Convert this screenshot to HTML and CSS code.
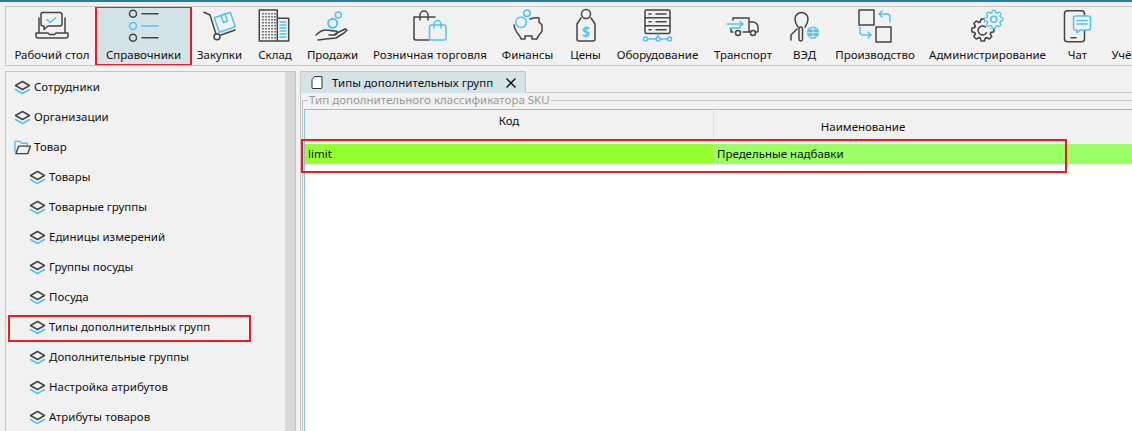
FILE: index.html
```html
<!DOCTYPE html>
<html lang="ru">
<head>
<meta charset="utf-8">
<title>Типы дополнительных групп</title>
<link rel="stylesheet" href="styles.css">
</head>
<body>
<svg class="defs" width="0" height="0" aria-hidden="true">
  <symbol id="layer" viewBox="0 0 17 14">
    <path class="sb" d="M1.500 9l7 4 7-4"/>
    <path class="sd" d="M8.500 1L15.500 5 8.500 9 1.500 5z"/>
  </symbol>
  <symbol id="folder" viewBox="0 0 18 15">
    <path class="sb" d="M1 12V1h5l2 2h6v2"/>
    <path class="sd" d="M5 6h12.500l-3 8H2z"/>
  </symbol>
  <g id="gear">
    <path d="M-2.500-8.200l.8-2.800h3.400l.8 2.800"/>
    <path transform="rotate(45)" d="M-2.500-8.200l.8-2.800h3.400l.8 2.800"/>
    <path transform="rotate(90)" d="M-2.500-8.200l.8-2.800h3.400l.8 2.800"/>
    <path transform="rotate(135)" d="M-2.500-8.200l.8-2.800h3.400l.8 2.800"/>
    <path transform="rotate(180)" d="M-2.500-8.200l.8-2.800h3.400l.8 2.800"/>
    <path transform="rotate(225)" d="M-2.500-8.200l.8-2.800h3.400l.8 2.800"/>
    <path transform="rotate(270)" d="M-2.500-8.200l.8-2.800h3.400l.8 2.800"/>
    <path transform="rotate(315)" d="M-2.500-8.200l.8-2.800h3.400l.8 2.800"/>
    <path d="M2.500-8.200A8.600 8.600 0 0 1 4 -7.500M7.500-4A8.600 8.600 0 0 1 8.200-2.500M8.200 2.500A8.600 8.600 0 0 1 7.500 4M4 7.500A8.600 8.600 0 0 1 2.500 8.200M-2.500 8.200A8.600 8.600 0 0 1-4 7.500M-7.500 4A8.600 8.600 0 0 1-8.200 2.500M-8.200-2.500A8.600 8.600 0 0 1-7.500-4M-4-7.500A8.600 8.600 0 0 1-2.500-8.200"/>
  </g>
</svg>
<div class="topline"></div>
<nav class="toolbar">
  <div class="tool">
    <svg class="ic" viewBox="0 0 40 36"><path class="sd" d="M11 5.500h17a2 2 0 0 1 2 2v9.500a2 2 0 0 1-2 2H16l-4 3.500v-3.500h-1a2 2 0 0 1-2-2V7.500a2 2 0 0 1 2-2z"/><path class="sd" d="M7 11v15M33 11v15M4 26h12l1.500 1.500h5L24 26h12v3a2 2 0 0 1-2 2H6a2 2 0 0 1-2-2z"/><path class="sb" d="M15 12.500l3 3 6-5"/></svg>
    <span>Рабочий стол</span>
  </div>
  <div class="tool tool-active">
    <svg class="ic" viewBox="0 0 40 36"><circle class="sd" cx="9" cy="6.700" r="3.500"/><path class="sd" d="M18 6.700h16"/><circle class="sb" cx="9" cy="19" r="3.500"/><path class="sb" d="M18 19h16"/><circle class="sd" cx="9" cy="30.700" r="3.500"/><path class="sd" d="M18 30.700h16"/></svg>
    <span>Справочники</span>
  </div>
  <div class="tool">
    <svg class="ic" viewBox="0 0 40 36"><path class="sd" d="M4 5.300L10 8l6 19.300M21 28l14-5"/><circle class="sd" cx="17" cy="29.700" r="3"/><path class="sb" d="M14.300 10.700L30.300 5.300l5 14.400-16 5.600z"/><path class="sb" d="M21 8.500l2.500 7 4-1.500-2.500-7"/></svg>
    <span>Закупки</span>
  </div>
  <div class="tool">
    <svg class="ic" viewBox="0 0 40 36"><path class="sd" d="M4.300 3h18v31h-18zM22.300 11.300h11.400V34H22.300z"/><path class="dots" d="M8 6v26M11 6v26M14 6v26M17 6v26M20 6v26"/><path class="stripes" d="M24.500 15h7M24.500 18h7M24.500 21h7M24.500 24h7M24.500 27h7M24.500 30h7"/></svg>
    <span>Склад</span>
  </div>
  <div class="tool">
    <svg class="ic" viewBox="0 0 40 36"><circle class="sb" cx="25.300" cy="8" r="3"/><circle class="sb sb2" cx="19.700" cy="16.300" r="4.500"/><path class="sd" d="M3 28c3-3 6-5 10-5 3 0 6 1 9 1 3 0 3 3 0 4h-6M22 27l10-5 2 1-3 3-8 5-10 1-8 1"/></svg>
    <span>Продажи</span>
  </div>
  <div class="tool">
    <svg class="ic" viewBox="0 0 40 36"><path class="sd" d="M25 10H4v21c0 1 .5 2 2 2h13M10 13V8a4 4 0 0 1 8 0v5"/><rect class="sb" x="19.500" y="18" width="16.500" height="15" rx="2"/><path class="sb" d="M24 21v-4a3.500 3.500 0 0 1 7 0v4"/></svg>
    <span>Розничная торговля</span>
  </div>
  <div class="tool">
    <svg class="ic" viewBox="0 0 40 36"><path class="sd" d="M22 12c3-1 6-2 9-1v4l3 3v6c-1 3-5 5-5 8h-5v-3h-7v3h-4c0-3-6-6-7-14"/><circle class="sb" cx="13" cy="15.300" r="5.300"/><circle class="sb" cx="19" cy="6.300" r="3.200"/></svg>
    <span>Финансы</span>
  </div>
  <div class="tool">
    <svg class="ic" viewBox="0 0 40 36"><circle class="sd" cx="20" cy="7" r="4.500"/><path class="sd" d="M15 11l-4 6v15a2 2 0 0 0 2 2h14a2 2 0 0 0 2-2V17l-4-6"/><text class="dollar" x="20" y="30" text-anchor="middle">$</text></svg>
    <span>Цены</span>
  </div>
  <div class="tool">
    <svg class="ic" viewBox="0 0 40 36"><rect class="sd" x="7" y="3" width="25" height="23.500" rx="1.500"/><path class="sd" d="M7 10.800h25M7 18.700h25M11 7h2M18 7h10M11 14.800h2M18 14.800h10M11 22.700h2M18 22.700h10"/><path class="sb" d="M20 27v3M9.500 32h8.500M22 32h7.500"/><circle class="sb" cx="7.500" cy="32" r="2"/><circle class="sb" cx="20" cy="32" r="2"/><circle class="sb" cx="31.500" cy="32" r="2"/></svg>
    <span>Оборудование</span>
  </div>
  <div class="tool">
    <svg class="ic" viewBox="0 0 40 36"><path class="sd" d="M10 11h16v14h-6M26 15h4c3 0 5 3 5 5v4a1 1 0 0 1-1 1h-1.500M26 25h1.500M10 25H8v-3M10 11v2"/><circle class="sd" cx="15" cy="26" r="2.500"/><circle class="sd" cx="30" cy="26" r="2.500"/><path class="sb" d="M4 17h16l-3-2.500M20 17l-3 2.500M7 21h10"/></svg>
    <span>Транспорт</span>
  </div>
  <div class="tool">
    <svg class="ic" viewBox="0 0 40 36"><path class="sd" d="M13 20c-1.500-2-3-4-3-8a6.500 6.500 0 0 1 13 0c0 4-1.500 6-3 8M6 33v-5l6-6"/><rect class="sd" x="14" y="20" width="3.500" height="14" rx="1.700"/><circle class="globe" cx="28" cy="25.700" r="6.200"/><path class="globe-lines" d="M22 25.700h12M28 19.700v12M24 22h8M24 29.500h8"/></svg>
    <span>ВЭД</span>
  </div>
  <div class="tool">
    <svg class="ic" viewBox="0 0 40 36"><path class="sd" d="M4 3h15v15H4zM21 20h15v15H21z"/><path class="sb" d="M35 15v-5a3 3 0 0 0-3-3h-8m3-3l-3 3 3 3M5 20v5a3 3 0 0 0 3 3h8m-3-3l3 3-3 3"/></svg>
    <span>Производство</span>
  </div>
  <div class="tool">
    <svg class="ic" viewBox="0 0 40 36"><use class="sd" href="#gear" transform="translate(14.800 23)"/><path class="sd" d="M18.500 25.500a4.500 4.500 0 1 1-1-5.500"/><circle class="gear-bg" cx="25.800" cy="12.300" r="9.500"/><use class="sb" href="#gear" transform="translate(25.800 12.300) scale(.82)"/><circle class="sb" cx="25.800" cy="12.300" r="3"/></svg>
    <span>Администрирование</span>
  </div>
  <div class="tool">
    <svg class="ic" viewBox="0 0 40 36"><rect class="sd" x="6.500" y="3.700" width="20" height="31" rx="3"/><path class="sd" d="M13 30.700h5"/><path class="sb bubble" d="M17.500 9h13a2 2 0 0 1 2 2v10a2 2 0 0 1-2 2H22l-3 3v-3h-1.500a2 2 0 0 1-2-2V11a2 2 0 0 1 2-2z"/><path class="sb" d="M19 13.500h10M19 17h10"/></svg>
    <span>Чат</span>
  </div>
  <div class="tool tool-cut">
    <span>Учёт</span>
  </div>
</nav>
<main class="main">
  <aside class="sidebar">
    <ul class="tree">
      <li class="row"><svg class="ti"><use href="#layer"/></svg>Сотрудники</li>
      <li class="row"><svg class="ti"><use href="#layer"/></svg>Организации</li>
      <li class="row"><svg class="ti"><use href="#folder"/></svg>Товар</li>
      <li class="row sub"><svg class="ti"><use href="#layer"/></svg>Товары</li>
      <li class="row sub"><svg class="ti"><use href="#layer"/></svg>Товарные группы</li>
      <li class="row sub"><svg class="ti"><use href="#layer"/></svg>Единицы измерений</li>
      <li class="row sub"><svg class="ti"><use href="#layer"/></svg>Группы посуды</li>
      <li class="row sub"><svg class="ti"><use href="#layer"/></svg>Посуда</li>
      <li class="row sub"><svg class="ti"><use href="#layer"/></svg>Типы дополнительных групп</li>
      <li class="row sub"><svg class="ti"><use href="#layer"/></svg>Дополнительные группы</li>
      <li class="row sub"><svg class="ti"><use href="#layer"/></svg>Настройка атрибутов</li>
      <li class="row sub"><svg class="ti"><use href="#layer"/></svg>Атрибуты товаров</li>
    </ul>
    <div class="scrollbar"></div>
  </aside>
  <section class="content">
    <div class="tabs">
      <div class="tab">
        <svg class="doc" viewBox="0 0 12 13"><path d="M3.500.5H11v11a1 1 0 0 1-1 1H2a1 1 0 0 1-1-1V3.500z"/></svg>
        <span class="tab-title">Типы дополнительных групп</span>
        <svg class="close" viewBox="0 0 10 10"><path d="M.5.500l9 9M9.500.500l-9 9"/></svg>
      </div>
    </div>
    <div class="panel">
      <fieldset class="group">
        <legend>Тип дополнительного классификатора SKU</legend>
        <div class="grid">
          <div class="grid-head">
            <div class="hcell hcell-top">Код</div>
            <div class="hcell hcell-mid">Наименование</div>
          </div>
          <div class="grid-row">
            <div class="cell cell-a">limit</div>
            <div class="cell cell-b">Предельные надбавки</div>
          </div>
        </div>
      </fieldset>
    </div>
  </section>
  <div class="mark mark-tree"></div>
  <div class="mark mark-row"></div>
</main>
</body>
</html>
```
FILE: styles.css
```css
* { box-sizing: border-box; }
html, body { margin: 0; height: 431px; overflow: hidden; }
body {
  background: #f1f1f1;
  color: #111;
  font: 11.5px/16px "Noto Sans", "Open Sans", sans-serif;
}
.defs { position: absolute; }
.sd, .sb, .dots, .stripes { fill: none; stroke-linecap: round; stroke-linejoin: round; }
.sd { stroke: #444; stroke-width: 1.5; }
.sb { stroke: #4fc3f1; stroke-width: 1.5; }
.sb2 { stroke-width: 2; }
.dots { stroke: #444; stroke-width: 1.4; stroke-dasharray: 1.500 1.500; stroke-linecap: butt; }
.stripes { stroke: #4fc3f1; stroke-width: 1.600; stroke-linecap: butt; }
.dollar { fill: #4fc3f1; font: 700 14px "Noto Sans", sans-serif; }
.globe { fill: #4fc3f1; }
.globe-lines { fill: none; stroke: #f1f1f1; stroke-width: .8; }
.gear-bg { fill: #f1f1f1; }
.bubble { fill: #f1f1f1; }

.topline { height: 2px; background: #2b7a9c; }
.toolbar {
  display: grid;
  grid-template-columns: 88px 95px 57px 54px 61px 134px 61px 55px 89px 82px 41px 100px 125px 55px 38px;
  height: 60px;
  margin: 4px 0 0 5px;
  padding-left: 2px;
  border: 1px solid #c6c6c6;
  border-right: 0;
  overflow: hidden;
}
.tool {
  display: flex;
  flex-direction: column;
  align-items: center;
  min-width: 0;
  white-space: nowrap;
}
.tool > span { margin-top: 4px; }
.ic { display: block; width: 40px; height: 36px; flex: none; }
.tool-active {
  background: #d3e3e8;
  outline: 2px solid #ed1c24;
  outline-offset: -1px;
  position: relative;
}
.tool-cut { padding-top: 40px; }
.tool-cut > span { margin-top: 0; }

.main {
  position: relative;
  display: flex;
  gap: 4px;
  margin: 5px 0 0 5px;
  height: 360px;
}
.sidebar {
  display: flex;
  flex: none;
  width: 291px;
  border: 1px solid #c6c6c6;
  border-bottom: 0;
}
.tree {
  flex: 1;
  margin: 0;
  padding: 0;
  list-style: none;
}
.row {
  display: flex;
  align-items: center;
  gap: 3px;
  height: 30px;
  padding-left: 8px;
}
.row.sub { padding-left: 23px; }
.ti { width: 17px; height: 15px; flex: none; }
.scrollbar { width: 10px; background: #d9d9d9; }

.content { flex: 1; display: flex; flex-direction: column; min-width: 0; }
.tabs { height: 22px; border-bottom: 1px solid #c6c6c6; flex: none; }
.tab {
  display: flex;
  align-items: center;
  width: 226px;
  height: 22px;
  padding-left: 10px;
  background: #d3e3e8;
  border: 1px solid #c6c6c6;
  border-bottom: 0;
}
.doc { width: 12px; height: 13px; flex: none; }
.doc path { fill: #fff; stroke: #333; stroke-width: 1; }
.tab-title { margin-left: 9px; white-space: nowrap; }
.close { width: 10px; height: 10px; margin-left: auto; margin-right: 9px; flex: none; }
.close path { fill: none; stroke: #111; stroke-width: 1.400; }
.panel { flex: 1; border-left: 1px solid #c6c6c6; padding-left: 1px; min-height: 0; }
.group {
  height: 100%;
  margin: 0;
  padding: 2px 0 0 1px;
  border: 0;
  border-top: 1px solid #c6c6c6;
  border-left: 1px solid #c6c6c6;
  min-width: 0;
}
.group legend {
  padding: 0 1px;
  margin-left: 4px;
  color: #9a9a9a;
  line-height: 14px;
}
.grid {
  height: 100%;
  background: #fff;
  border-top: 1px solid #86c5dc;
  border-left: 1px solid #86c5dc;
}
.grid-head {
  display: grid;
  grid-template-columns: 408px 1fr;
  height: 34px;
  background: #f1f1f1;
}
.hcell { text-align: center; }
.hcell-top { padding-top: 3px; }
.hcell-mid { padding-top: 9px; border-left: 1px solid #e2e2e2; padding-right: 120px; }
.grid-row {
  display: grid;
  grid-template-columns: 408px 1fr;
  height: 21px;
  border-bottom: 1px solid #ececec;
}
.cell { padding-left: 3px; line-height: 20px; }
.cell-a { background: #96ff2f; }
.cell-b { background: #9bff66; border-left: 1px solid #fff; }
.mark { position: absolute; border: 2px solid #ed1c24; pointer-events: none; }
.mark-tree { left: 3px; top: 244px; width: 243px; height: 27px; }
.mark-row { left: 296px; top: 68px; width: 766px; height: 34px; }
```
